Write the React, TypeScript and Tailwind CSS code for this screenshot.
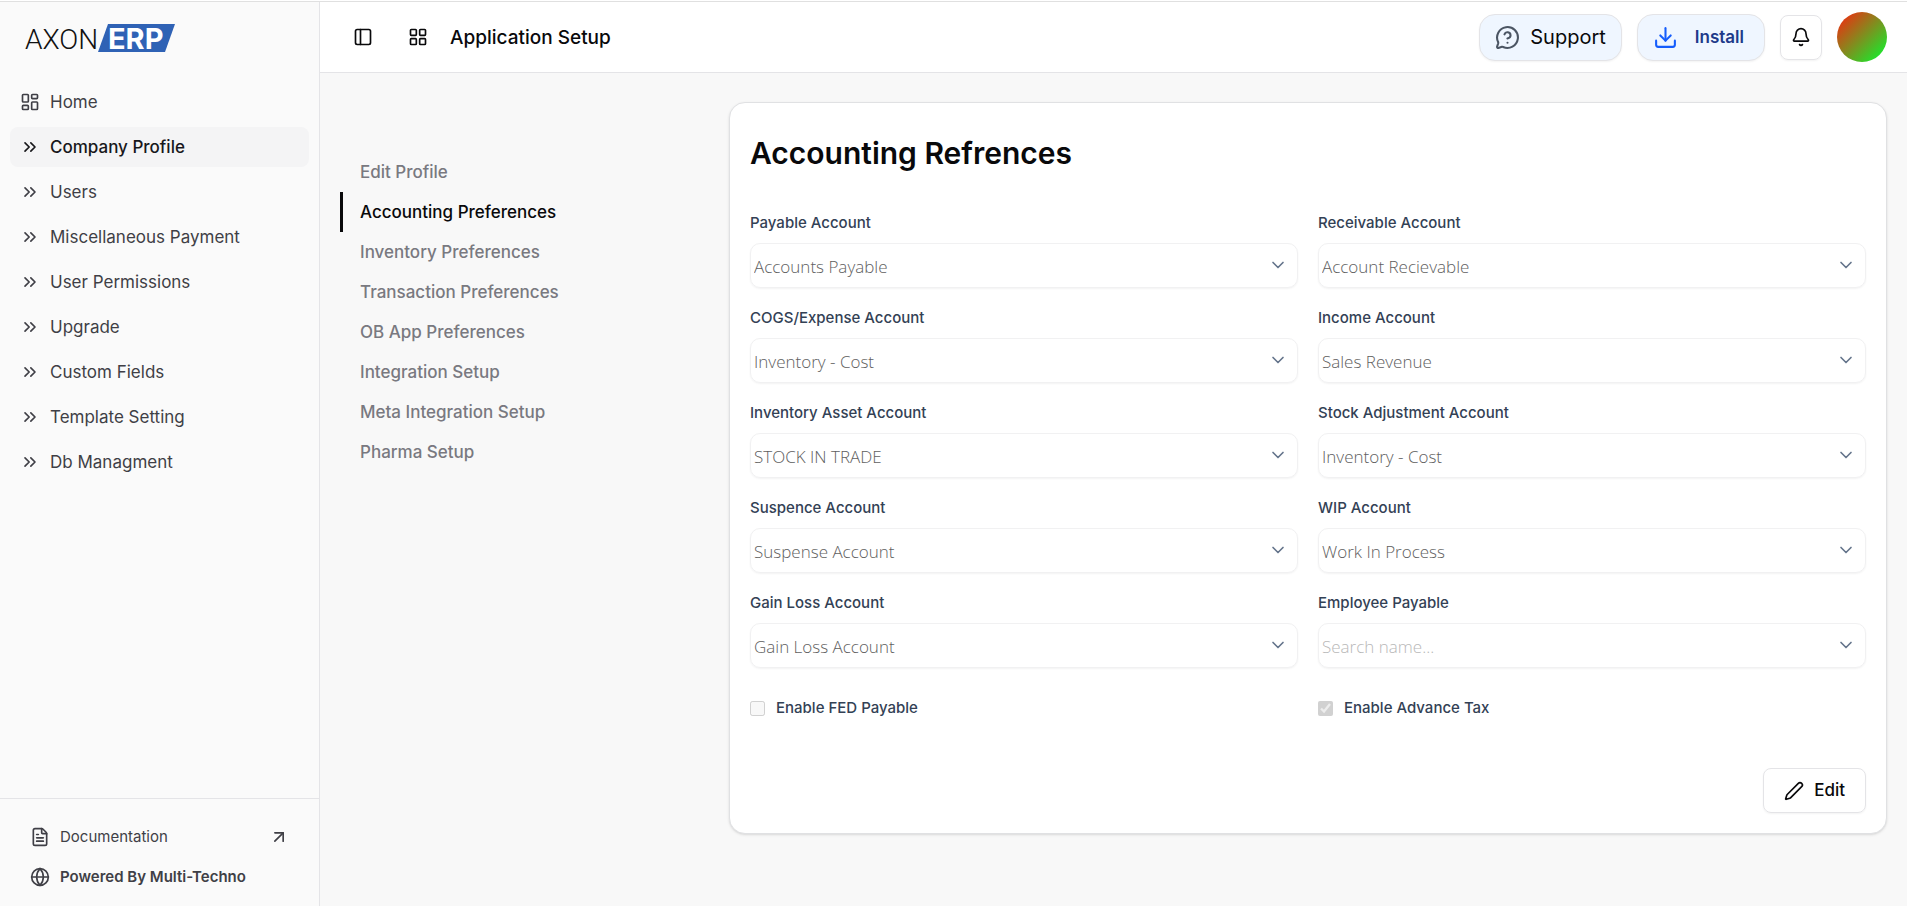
import React, { useState } from 'react';
import {
  ArrowUpRight,
  Bell,
  ChevronDown,
  ChevronsRight,
  Download,
  FileText,
  Globe,
  LayoutDashboard,
  LayoutGrid,
  MessageCircleQuestionMark,
  PanelLeft,
  Pen,
} from 'lucide-react';

interface Field {
  id: string;
  label: string;
  value: string;
}

const sidebarItems = [
  'Home',
  'Company Profile',
  'Users',
  'Miscellaneous Payment',
  'User Permissions',
  'Upgrade',
  'Custom Fields',
  'Template Setting',
  'Db Managment',
];

const tabs = [
  'Edit Profile',
  'Accounting Preferences',
  'Inventory Preferences',
  'Transaction Preferences',
  'OB App Preferences',
  'Integration Setup',
  'Meta Integration Setup',
  'Pharma Setup',
];

const fields: Field[] = [
  { id: 'payable', label: 'Payable Account', value: 'Accounts Payable' },
  { id: 'receivable', label: 'Receivable Account', value: 'Account Recievable' },
  { id: 'cogs', label: 'COGS/Expense Account', value: 'Inventory - Cost' },
  { id: 'income', label: 'Income Account', value: 'Sales Revenue' },
  { id: 'inventoryAsset', label: 'Inventory Asset Account', value: 'STOCK IN TRADE' },
  { id: 'stockAdjustment', label: 'Stock Adjustment Account', value: 'Inventory - Cost' },
  { id: 'suspence', label: 'Suspence Account', value: 'Suspense Account' },
  { id: 'wip', label: 'WIP Account', value: 'Work In Process' },
  { id: 'gainLoss', label: 'Gain Loss Account', value: 'Gain Loss Account' },
  { id: 'employeePayable', label: 'Employee Payable', value: '' },
];

const Logo: React.FC = () => (
  <svg width="152" height="42" viewBox="0 0 152 42" role="img" aria-label="Axon ERP">
    <text x="1" y="31" className="fill-[#111111] font-['Roboto',sans-serif] text-[28px] font-light">
      AXON
    </text>
    <path d="M84 6 H151 L141 34 H74 Z" fill="#2f62b5" />
    <text x="84" y="31" className="fill-white font-['Inter',sans-serif] text-[29px] font-bold">
      ERP
    </text>
  </svg>
);

const Sidebar: React.FC = () => (
  <aside className="flex w-80 shrink-0 flex-col border-r border-[#e4e4e7] bg-[#fafafa] text-[#3f3f46]">
    <a href="#" className="mt-4 ml-6">
      <Logo />
    </a>
    <nav className="mt-[22px] flex flex-1 flex-col gap-[5px] px-[10px]">
      {sidebarItems.map((item) => {
        const Icon = item === 'Home' ? LayoutDashboard : ChevronsRight;
        const active = item === 'Company Profile';
        return (
          <a
            key={item}
            href="#"
            className={`flex h-10 items-center gap-[10px] rounded-lg px-[10px] text-[17px] ${
              active ? 'bg-[#f4f4f5] font-medium text-[#18181b]' : ''
            }`}
          >
            <Icon size={20} />
            <span className="pt-0.5">{item}</span>
          </a>
        );
      })}
    </nav>
    <div className="flex flex-col border-t border-[#e4e4e7] px-[30px] pt-[18px] pb-[9px] text-[15px]">
      <a href="#" className="flex h-10 items-center gap-[10px]">
        <FileText size={20} />
        <span className="flex-1">Documentation</span>
        <ArrowUpRight size={20} />
      </a>
      <a href="#" className="flex h-10 items-center gap-[10px] font-semibold">
        <Globe size={20} />
        <span>Powered By Multi-Techno</span>
      </a>
    </div>
  </aside>
);

const Header: React.FC = () => (
  <header className="flex h-[71px] shrink-0 items-center border-b border-[#e4e4e7] bg-white pr-5 pl-[33px]">
    <button type="button" aria-label="Toggle sidebar">
      <PanelLeft size={20} />
    </button>
    <button type="button" aria-label="Apps" className="ml-[35px]">
      <LayoutGrid size={20} />
    </button>
    <h1 className="ml-[22px] pt-0.5 text-[19px] font-medium">Application Setup</h1>
    <div className="ml-auto flex items-center gap-[15px]">
      <button
        type="button"
        className="flex h-[47px] items-center gap-[10px] rounded-2xl border border-[#e4e4e7] bg-[#eff6ff] px-[15px] text-xl shadow-xs"
      >
        <MessageCircleQuestionMark size={25} className="text-[#4b5563]" />
        Support
      </button>
      <button
        type="button"
        className="flex h-[47px] items-center gap-[17px] rounded-2xl border border-[#e4e4e7] bg-[#eff6ff] pr-5 pl-[15px] text-[17px] font-semibold text-[#1e3a8a] shadow-xs"
      >
        <Download size={25} className="text-[#155dfc]" />
        <span className="pt-0.5">Install</span>
      </button>
      <button
        type="button"
        aria-label="Notifications"
        className="flex h-[45px] w-[42px] items-center justify-center rounded-lg border border-[#e4e4e7] shadow-xs"
      >
        <Bell size={20} />
      </button>
      <button
        type="button"
        aria-label="Account"
        className="size-[50px] rounded-full bg-linear-to-br/srgb from-[#ff1e0e] to-[#00ff30]"
      />
    </div>
  </header>
);

const AccountSelect: React.FC<{ field: Field }> = ({ field }) => (
  <div>
    <label htmlFor={field.id} className="block text-[15px] leading-5 font-medium text-[#334155]">
      {field.label}
    </label>
    <div className="mt-[10px] flex h-[45px] items-center rounded-[10px] border border-[#f1f1f2] pr-[9px] pl-[3px] shadow-xs">
      <input
        id={field.id}
        type="text"
        defaultValue={field.value}
        placeholder="Search name..."
        disabled
        className="min-w-0 flex-1 bg-transparent pt-0.5 font-['Open_Sans',sans-serif] text-[17px] font-light text-[#606060] placeholder:text-[#b8b8b8]"
      />
      <ChevronDown size={20} className="mb-0.5 text-[#64748b]" />
    </div>
  </div>
);

const CheckField: React.FC<{ id: string; label: string; checked: boolean }> = ({ id, label, checked }) => (
  <div className="flex h-5 items-center gap-[11px]">
    <input id={id} type="checkbox" defaultChecked={checked} disabled className="size-[15px]" />
    <label htmlFor={id} className="text-[15px] font-medium text-[#334155]">
      {label}
    </label>
  </div>
);

const App: React.FC = () => {
  const [activeTab, setActiveTab] = useState('Accounting Preferences');

  return (
    <div className="flex min-h-screen flex-col bg-[#f8f8f8] font-['Inter',sans-serif] text-[#09090b]">
      <div className="h-[2px] border-b border-[#e0e0e0] bg-white" />
      <div className="flex flex-1">
        <Sidebar />
        <div className="flex min-w-0 flex-1 flex-col">
          <Header />
          <main className="flex flex-1 items-start pt-[29px] pr-5 pl-5">
            <nav className="mt-[50px] flex w-[389px] shrink-0 flex-col">
              {tabs.map((tab) => (
                <button
                  key={tab}
                  type="button"
                  onClick={() => setActiveTab(tab)}
                  className={`flex h-10 items-center border-l-3 pt-0.5 pl-[17px] text-[17px] font-medium ${
                    tab === activeTab ? 'border-[#09090b] text-[#09090b]' : 'border-transparent text-[#797980]'
                  }`}
                >
                  {tab}
                </button>
              ))}
            </nav>
            <section className="min-w-0 flex-1 rounded-2xl border border-[#e0e1e3] bg-white p-5 shadow-sm">
              <h2 className="mt-[10px] text-[30px] leading-10 font-semibold">Accounting Refrences</h2>
              <form>
                <div className="mt-10 grid grid-cols-2 gap-5">
                  {fields.map((field) => (
                    <AccountSelect key={field.id} field={field} />
                  ))}
                </div>
                <div className="mt-[30px] grid grid-cols-2 gap-5">
                  <CheckField id="fed" label="Enable FED Payable" checked={false} />
                  <CheckField id="advanceTax" label="Enable Advance Tax" checked />
                </div>
                <div className="mt-[50px] flex justify-end">
                  <button
                    type="button"
                    className="flex h-[45px] items-center gap-[10px] rounded-lg border border-[#e4e4e7] px-5 text-[17px] font-medium shadow-xs"
                  >
                    <Pen size={20} />
                    Edit
                  </button>
                </div>
              </form>
            </section>
          </main>
        </div>
      </div>
    </div>
  );
};

export default App;
